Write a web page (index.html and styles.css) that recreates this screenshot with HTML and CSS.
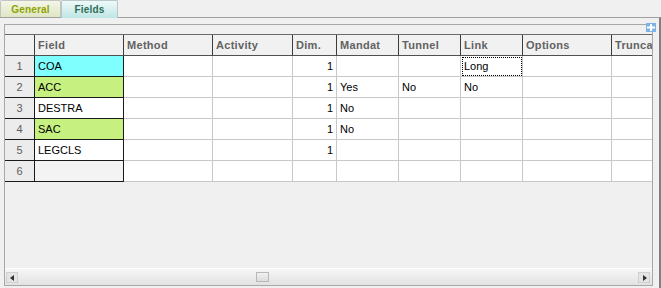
FILE: index.html
```html
<!DOCTYPE html>
<html lang="en">
<head>
    <meta charset="UTF-8">
    <title>Fields</title>
    <link rel="stylesheet" href="styles.css">
</head>
<body>
    <div class="tabs">
        <div class="tab tab-general">General</div>
        <div class="tab tab-fields">Fields</div>
    </div>

    <div class="panel">
        <div class="grid-box">
            <span class="add-btn">
                <svg width="10" height="9" viewBox="0 0 10 9">
                    <rect x="0" y="0" width="10" height="9" fill="#7fb3e6"/>
                    <rect x="4" y="1" width="2" height="7" fill="#fff"/>
                    <rect x="1" y="3.5" width="8" height="2" fill="#fff"/>
                </svg>
            </span>

            <div class="grid-view">
                <div class="grid">
                    <!-- header -->
                    <div class="hd rn-hd"></div>
                    <div class="hd">Field</div>
                    <div class="hd">Method</div>
                    <div class="hd">Activity</div>
                    <div class="hd">Dim.</div>
                    <div class="hd">Mandat</div>
                    <div class="hd">Tunnel</div>
                    <div class="hd">Link</div>
                    <div class="hd">Options</div>
                    <div class="hd">Truncate</div>

                    <!-- row 1 -->
                    <div class="rn">1</div>
                    <div class="fd cyan">COA</div>
                    <div class="c"></div>
                    <div class="c"></div>
                    <div class="c num">1</div>
                    <div class="c"></div>
                    <div class="c"></div>
                    <div class="c focus">Long</div>
                    <div class="c"></div>
                    <div class="c"></div>

                    <!-- row 2 -->
                    <div class="rn">2</div>
                    <div class="fd green">ACC</div>
                    <div class="c"></div>
                    <div class="c"></div>
                    <div class="c num">1</div>
                    <div class="c">Yes</div>
                    <div class="c">No</div>
                    <div class="c">No</div>
                    <div class="c"></div>
                    <div class="c"></div>

                    <!-- row 3 -->
                    <div class="rn">3</div>
                    <div class="fd">DESTRA</div>
                    <div class="c"></div>
                    <div class="c"></div>
                    <div class="c num">1</div>
                    <div class="c">No</div>
                    <div class="c"></div>
                    <div class="c"></div>
                    <div class="c"></div>
                    <div class="c"></div>

                    <!-- row 4 -->
                    <div class="rn">4</div>
                    <div class="fd green">SAC</div>
                    <div class="c"></div>
                    <div class="c"></div>
                    <div class="c num">1</div>
                    <div class="c">No</div>
                    <div class="c"></div>
                    <div class="c"></div>
                    <div class="c"></div>
                    <div class="c"></div>

                    <!-- row 5 -->
                    <div class="rn">5</div>
                    <div class="fd">LEGCLS</div>
                    <div class="c"></div>
                    <div class="c"></div>
                    <div class="c num">1</div>
                    <div class="c"></div>
                    <div class="c"></div>
                    <div class="c"></div>
                    <div class="c"></div>
                    <div class="c"></div>

                    <!-- row 6 (new row) -->
                    <div class="rn">6</div>
                    <div class="fd new"></div>
                    <div class="c"></div>
                    <div class="c"></div>
                    <div class="c"></div>
                    <div class="c"></div>
                    <div class="c"></div>
                    <div class="c"></div>
                    <div class="c"></div>
                    <div class="c"></div>
                </div>
            </div>

            <div class="hscroll">
                <span class="arrow arrow-left"></span>
                <div class="track">
                    <span class="thumb"></span>
                </div>
                <span class="arrow arrow-right"></span>
            </div>
        </div>
    </div>
</body>
</html>
```

FILE: styles.css
```css
body {
    margin: 0;
    width: 661px;
    height: 288px;
    overflow: hidden;
    background-color: #f0f0f0;
    font-family: "Liberation Sans", Arial, sans-serif;
    font-size: 11px;
    color: #000;
}
.tabs {
    display: flex;
    height: 17px;
}
.tab {
    box-sizing: border-box;
    height: 17px;
    display: flex;
    align-items: center;
    justify-content: center;
    font-size: 10px;
    font-weight: bold;
    letter-spacing: 0.2px;
    border: 1px solid #c4c4c4;
    border-bottom: none;
    border-radius: 2px 2px 0 0;
}
.tab-general {
    width: 61px;
    color: #8fa400;
    background: linear-gradient(#f4f6e8, #dfe6c4);
}
.tab-fields {
    width: 57px;
    height: 18px;
    margin-bottom: -1px;
    position: relative;
    z-index: 1;
    color: #2b6d55;
    border-color: #b8c8c8;
    background: linear-gradient(#eef9f9, #bfe6e4);
}
.panel {
    box-sizing: border-box;
    height: 271px;
    border-top: 1px solid #a0a0a0;
    border-right: 2px solid #808080;
    padding: 6px 0 0 4px;
}
.grid-box {
    position: relative;
    box-sizing: border-box;
    width: 649px;
    height: 262px;
    border: 1px solid #a8a8a8;
    padding-top: 9px;
    display: flex;
    flex-direction: column;
}
.add-btn {
    position: absolute;
    top: -2px;
    right: -4px;
    line-height: 0;
}
.grid-view {
    flex: 1;
    overflow: hidden;
}
.grid {
    display: grid;
    grid-template-columns: 30px 89px 89px 80px 44px 62px 62px 62px 89px 89px;
    grid-auto-rows: 21px;
    width: max-content;
    border-top: 1px solid #6a6a6a;
}
.grid > div {
    box-sizing: border-box;
    padding: 0 3px;
    line-height: 20px;
    white-space: nowrap;
    overflow: hidden;
}
.hd {
    background-color: #f1f1f1;
    color: #626262;
    font-weight: bold;
    letter-spacing: 0.3px;
    border-right: 1px solid #3c3c3c;
    border-bottom: 1px solid #505050;
}
.rn {
    background-color: #ececec;
    color: #5c5c5c;
    text-align: center;
    border-right: 1px solid #1a1a1a;
    border-bottom: 1px solid #1a1a1a;
}
.fd {
    background-color: #fff;
    border-right: 1px solid #1a1a1a;
    border-bottom: 1px solid #1a1a1a;
}
.fd.cyan {
    background-color: #80ffff;
}
.fd.green {
    background-color: #c6f080;
}
.fd.new {
    background-color: #f3f3f3;
}
.c {
    background-color: #fff;
    border-right: 1px solid #c8c8c8;
    border-bottom: 1px solid #c8c8c8;
}
.c.num {
    text-align: right;
}
.c.focus {
    outline: 1px dotted #000;
    outline-offset: -2px;
}
.hscroll {
    height: 17px;
    display: flex;
    align-items: center;
    padding: 0 2px 0 1px;
    border-top: 1px solid #fff;
    box-sizing: border-box;
    background: linear-gradient(#f6f6f6, #e2e2e2);
}
.track {
    flex: 1;
    position: relative;
    height: 11px;
}
.thumb {
    position: absolute;
    left: 238px;
    top: 0;
    width: 13px;
    height: 10px;
    box-sizing: border-box;
    border: 1px solid #b8b8b8;
    background: linear-gradient(#f2f2f2, #dcdcdc);
}
.arrow {
    width: 12px;
    height: 11px;
    box-sizing: border-box;
    border: 1px solid #cfcfcf;
    background-color: #e4e4e4;
    position: relative;
}
.arrow::after {
    content: "";
    position: absolute;
    top: 2px;
    border-top: 3px solid transparent;
    border-bottom: 3px solid transparent;
}
.arrow-left::after {
    left: 3px;
    border-right: 4px solid #303030;
}
.arrow-right::after {
    left: 4px;
    border-left: 4px solid #303030;
}
```
